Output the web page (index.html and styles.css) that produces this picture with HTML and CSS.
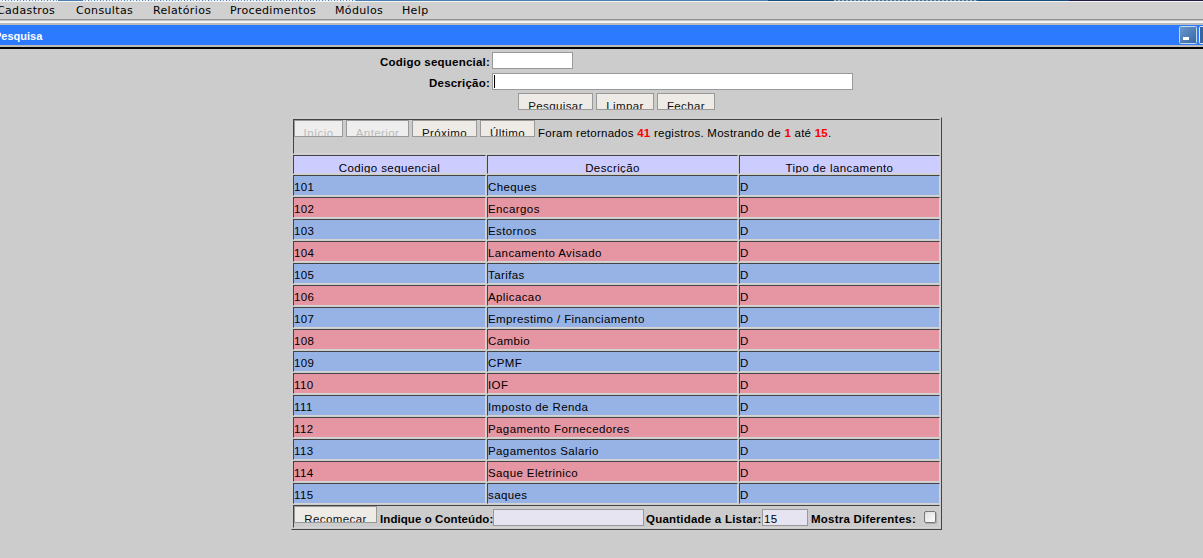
FILE: index.html
```
<!DOCTYPE html>
<html lang="pt-BR">
<head>
<meta charset="utf-8">
<title>Pesquisa</title>
<link rel="stylesheet" href="styles.css">
</head>
<body>
<div class="strip"><i class="s1"></i><i class="s2"></i><i class="s3"></i><i class="s4"></i><i class="s5"></i><i class="s6"></i></div>
<nav class="menu"><span class="m1">Cadastros</span><span class="m2">Consultas</span><span class="m3">Relatórios</span><span class="m4">Procedimentos</span><span class="m5">Módulos</span><span class="m6">Help</span></nav>
<div class="ridge"></div>
<header class="title"><b>Pesquisa</b>
<svg class="winbtns" width="24" height="20" viewBox="0 0 24 20"><defs><linearGradient id="g" x1="0" y1="0" x2="1" y2="1"><stop offset="0" stop-color="#6c9acb"/><stop offset="1" stop-color="#3565a8"/></linearGradient></defs><rect x=".5" y="1.500" width="17" height="17" rx="1" fill="url(#g)" stroke="#c3d5ef"/><rect x="4" y="12" width="6" height="3" fill="#fff"/><rect x="20.500" y="1.500" width="17" height="17" rx="1" fill="#3565a0" stroke="#e4edf8"/></svg></header>
<div class="rule"></div>
<main>
<form class="search">
<label class="lab">Codigo sequencial:</label><span class="field code"></span>
<label class="lab">Descrição:</label><span class="field desc"><i class="caret"></i></span>
</form>
<div class="actions"><span class="btn w75"><em>Pesquisar</em></span><span class="btn w58"><em>Limpar</em></span><span class="btn w58"><em>Fechar</em></span></div>
<section class="grid">
<div class="cell nav"><span class="btn off w49"><em>Início</em></span><span class="btn off w63"><em>Anterior</em></span><span class="btn w65"><em>Próximo</em></span><span class="btn w55"><em>Último</em></span><p class="info">Foram retornados <b>41</b> registros. Mostrando de <b>1</b> até <b>15</b>.</p></div>
<div class="cell head">Codigo sequencial</div><div class="cell head">Descrição</div><div class="cell head">Tipo de lancamento</div>
<div class="cell blue">101</div><div class="cell blue">Cheques</div><div class="cell blue">D</div>
<div class="cell pink">102</div><div class="cell pink">Encargos</div><div class="cell pink">D</div>
<div class="cell blue">103</div><div class="cell blue">Estornos</div><div class="cell blue">D</div>
<div class="cell pink">104</div><div class="cell pink">Lancamento Avisado</div><div class="cell pink">D</div>
<div class="cell blue">105</div><div class="cell blue">Tarifas</div><div class="cell blue">D</div>
<div class="cell pink">106</div><div class="cell pink">Aplicacao</div><div class="cell pink">D</div>
<div class="cell blue">107</div><div class="cell blue">Emprestimo / Financiamento</div><div class="cell blue">D</div>
<div class="cell pink">108</div><div class="cell pink">Cambio</div><div class="cell pink">D</div>
<div class="cell blue">109</div><div class="cell blue">CPMF</div><div class="cell blue">D</div>
<div class="cell pink">110</div><div class="cell pink">IOF</div><div class="cell pink">D</div>
<div class="cell blue">111</div><div class="cell blue">Imposto de Renda</div><div class="cell blue">D</div>
<div class="cell pink">112</div><div class="cell pink">Pagamento Fornecedores</div><div class="cell pink">D</div>
<div class="cell blue">113</div><div class="cell blue">Pagamentos Salario</div><div class="cell blue">D</div>
<div class="cell pink">114</div><div class="cell pink">Saque Eletrinico</div><div class="cell pink">D</div>
<div class="cell blue">115</div><div class="cell blue">saques</div><div class="cell blue">D</div>
<div class="cell foot"><span class="btn w83"><em>Recomeçar</em></span><b class="f1">Indique o Conteúdo:</b><span class="field lilac c151"></span><b class="f2">Quantidade a Listar:</b><span class="field lilac c46">15</span><b class="f3">Mostra Diferentes:</b><i class="check"></i></div>
</section>
</main>
</body>
</html>
```
FILE: styles.css
```
* { box-sizing: border-box; }
body { margin: 0; width: 1203px; height: 558px; overflow: hidden; background: #ccc; color: #000; font: 11.5px/14px "Liberation Sans", Arial, sans-serif; letter-spacing: .4px; white-space: nowrap; }
b, .lab { font-weight: bold; letter-spacing: .22px; }
em { font-style: normal; }

.strip { height: 1px; display: flex; background: #4c80b5; }
.strip i { height: 1px; }
.s1, .s3 { background: repeating-linear-gradient(90deg, #dfe9f3 0 2px, #7ba0c8 2px 3px, #f4f7fa 3px 5px, #4c80b5 5px 6px); }
.s1 { width: 58px; }
.s2 { width: 25px; }
.s3 { width: 273px; }
.s4 { width: 412px; }
.s5 { width: 301px; background: repeating-linear-gradient(90deg, #9ab6cc 0 2px, #3d6f96 2px 4px) 66px 0 / 144px 1px no-repeat #164f7c; }
.s6 { width: 134px; background: #251a42; }

.menu { height: 18px; border-top: 1px solid #f4f4f4; background: #d0d0d0; display: flex; font: 11px/17px "DejaVu Sans", sans-serif; letter-spacing: .35px; }
.menu span { flex: none; }
.m1 { width: 79px; margin-left: -3px; }
.m2 { width: 77px; }
.m3 { width: 77px; }
.m4 { width: 105px; }
.m5 { width: 67px; }
.ridge { height: 6px; background: linear-gradient(#8f8f8f 0 1px, #c4c4c4 1px 2px, #f4f4f4 2px 4px, #bbb 4px 6px); }
.title { height: 20px; background: #2b7aff; color: #fff; display: flex; justify-content: space-between; font-size: 11px; line-height: 22px; }
.title b { margin-left: -6px; letter-spacing: 0; }
.winbtns { width: 24px; }
.rule { height: 4px; background: linear-gradient(#bbb 0 2px, #000 2px 4px); }

.search { display: grid; grid-template-columns: 490px 1fr; grid-template-rows: 17px 17px; gap: 4px 2px; padding-top: 3px; }
.lab { text-align: right; line-height: 21px; }
.field { display: block; height: 17px; border: 1px solid #999; background: #fff; }
.code { width: 81px; }
.desc { width: 361px; padding: 1px; }
.caret { display: block; width: 1px; height: 13px; background: #000; }
.actions { display: flex; gap: 3px; margin: 3px 0 0 518px; }
.btn { display: block; flex: none; height: 17px; border: 1px solid #999; background: #eeebe6; color: #111; overflow: hidden; text-align: center; line-height: 14px; padding-top: 5px; }
.off { background: #eee; color: #bbb; }
.w75 { width: 75px; } .w58 { width: 58px; } .w49 { width: 49px; } .w63 { width: 63px; } .w65 { width: 65px; } .w55 { width: 55px; } .w83 { width: 83px; }

.grid { display: grid; width: 651px; height: 413px; margin: 7px 0 0 291px; padding: 1px; gap: 1px; border: 1px solid; border-color: #d0d0d0 #444 #444 #d0d0d0; grid-template-columns: 193px 251px 201px; grid-template-rows: 35px 19px repeat(15, 21px) 23px; }
.cell { border: 1px solid; border-color: #444 #d4d4d4 #d4d4d4 #444; overflow: hidden; line-height: 23px; }
.nav, .foot { grid-column: 1 / -1; display: flex; }
.nav { gap: 3px; }
.info { margin: 0; line-height: 26px; letter-spacing: .27px; }
.info b { color: #f00; }
.head { background: #ccf; text-align: center; line-height: 24px; }
.blue { background: #97b3e6; }
.pink { background: #e696a3; }
.foot b { line-height: 26px; flex: none; }
.foot .f1 { width: 116px; padding-left: 3px; letter-spacing: .08px; }
.f2 { width: 118px; padding-left: 2px; }
.f3 { width: 116px; padding-left: 3px; }
.lilac { flex: none; margin-top: 3px; background: #e6e4f1; line-height: 19px; padding-left: 1px; }
.c151 { width: 151px; }
.c46 { width: 46px; }
.check { width: 12px; height: 12px; margin-top: 5px; border: 1px solid #777; border-radius: 2px; background: linear-gradient(135deg, #ddd, #fff); box-shadow: 1px 1px 0 #aaa; }
```
